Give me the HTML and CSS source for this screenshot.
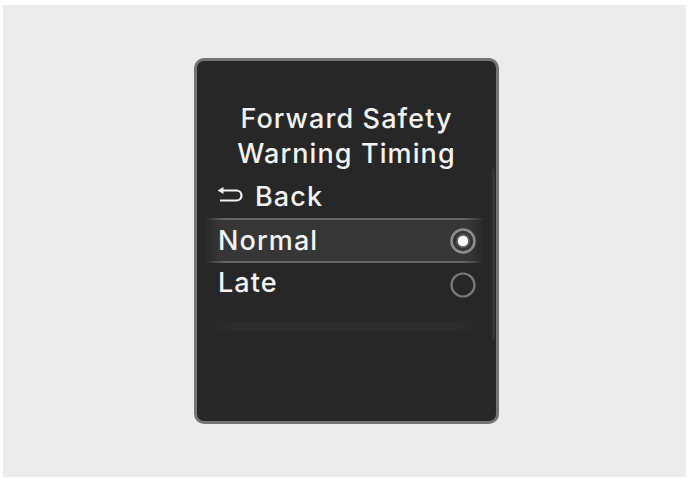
FILE: index.html
```html
<!DOCTYPE html>
<html>
<head>
<meta charset="utf-8">
<link rel="stylesheet" href="styles.css">
</head>
<body>
<div class="frame">
  <div class="panel">
    <div class="content">
      <div class="title">Forward Safety<br>Warning Timing</div>
      <div class="row back">
        <svg class="back-icon" width="27" height="16" viewBox="0 0 27 16">
          <path d="M6 3.5 H19.5 A5 5 0 0 1 19.5 13.5 H3" fill="none" stroke="#f2f2f2" stroke-width="2.2"/>
          <path d="M0.5 3.5 L6.5 0 L6.5 7 Z" fill="#f2f2f2"/>
        </svg>
        <span>Back</span>
      </div>
      <div class="row selected">
        <span>Normal</span>
        <svg class="radio" width="28" height="28" viewBox="0 0 28 28">
          <circle cx="14" cy="14" r="11.5" fill="none" stroke="#8c8c8c" stroke-width="2.6"/>
          <circle cx="14" cy="14" r="7" fill="#ffffff" opacity="0.2"/>
          <circle cx="14" cy="14" r="5.2" fill="#ffffff"/>
        </svg>
      </div>
      <div class="row">
        <span class="label-up">Late</span>
        <svg class="radio" width="28" height="28" viewBox="0 0 28 28">
          <circle cx="14" cy="14" r="11.5" fill="none" stroke="#7a7a7a" stroke-width="2.2"/>
        </svg>
      </div>
      <div class="divider"></div>
    </div>
    <div class="track"></div>
  </div>
</div>
</body>
</html>
```

FILE: styles.css
```css
html, body {
  margin: 0;
  padding: 0;
  background: #ffffff;
}

.frame {
  margin: 5px 4px 0 3px;
  height: 472px;
  background: #ececec;
  padding: 53px 0 0 191px;
  box-sizing: border-box;
}

.panel {
  width: 305px;
  height: 366px;
  box-sizing: border-box;
  border: 3px solid #747474;
  border-radius: 10px;
  background: #272727;
  display: flex;
  font-family: Inter, Roboto, "Liberation Sans", sans-serif;
  font-weight: 500;
  color: #f3f3f3;
  letter-spacing: 1.1px;
}

.content {
  flex: 1;
  padding: 40px 8px 0 8px;
}

.title {
  font-size: 27px;
  line-height: 35px;
  text-align: center;
  padding-left: 4px;
}

.row {
  height: 44px;
  display: flex;
  align-items: center;
  justify-content: space-between;
  padding: 0 7px 0 13px;
  font-size: 27px;
}

.row.back {
  justify-content: flex-start;
  gap: 11px;
  padding-left: 12px;
  margin-top: 3px;
}

.back-icon {
  display: block;
  margin-top: -3px;
}

.label-up {
  margin-top: -5px;
}

.row.selected {
  height: 45px;
  background:
    linear-gradient(to right, transparent, rgba(110,110,110,0.9) 8%, rgba(110,110,110,0.9) 92%, transparent) top / 100% 2px no-repeat,
    linear-gradient(to right, transparent, rgba(110,110,110,0.9) 8%, rgba(110,110,110,0.9) 92%, transparent) bottom / 100% 2px no-repeat,
    linear-gradient(to right, transparent, #363636 5%, #363636 95%, transparent);
}

.radio {
  display: block;
}

.divider {
  margin-top: 14px;
  height: 10px;
  background: linear-gradient(to right, transparent, #2c2c2c 10%, #2c2c2c 90%, transparent);
}

.track {
  width: 3px;
  margin: 108px 1px 0 0;
  height: 170px;
  background: #333333;
}
```
